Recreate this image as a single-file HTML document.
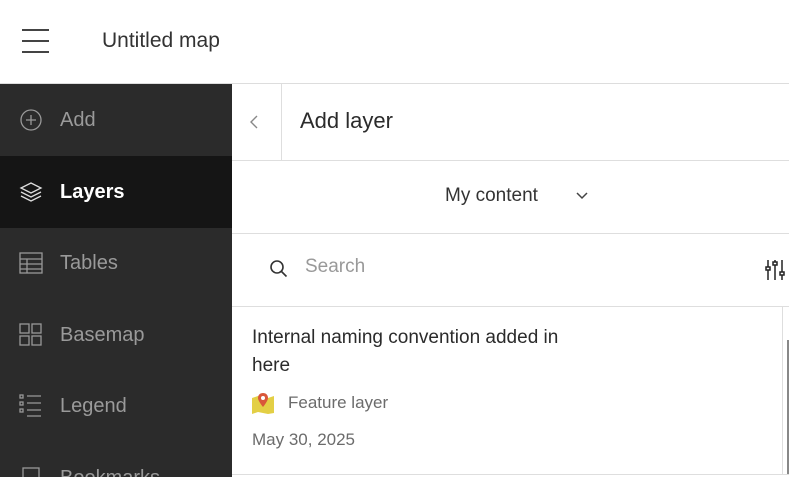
<!DOCTYPE html>
<html style="width:789px;height:477px;overflow:hidden"><head><style>
*{margin:0;padding:0;box-sizing:border-box}
body{width:789px;height:477px;overflow:hidden;background:#fff;font-family:"Liberation Sans",sans-serif;position:relative;color:#2b2b2b}
.top{position:absolute;left:0;top:0;width:789px;height:84px;border-bottom:1px solid #ddd}
.side{position:absolute;left:0;top:84px;width:232px;height:393px;background:#2b2b2b;overflow:hidden}
.item{position:absolute;left:0;width:232px;height:72px;color:#9a9a9a;font-size:20px;overflow:hidden}
.item span{position:absolute;left:60px;top:25px}
.item svg{position:absolute;left:19px;top:24px}
.abs{position:absolute}
.hl{position:absolute;background:#dedede;height:1px}
</style></head><body>
<div class="top">
<div class="abs" style="left:22px;top:29px;width:27px;height:2px;background:#444"></div>
<div class="abs" style="left:22px;top:40px;width:27px;height:2px;background:#444"></div>
<div class="abs" style="left:22px;top:51px;width:27px;height:2px;background:#444"></div>
<div class="abs" style="left:102px;top:29px;font-size:21px;color:#333">Untitled map</div>
</div>
<div class="side">
<div class="item" style="top:0"><svg width="24" height="24" viewBox="0 0 24 24" fill="none" stroke="#999" stroke-width="1.3"><circle cx="12" cy="12" r="10"/><path d="M12 7v10M7 12h10"/></svg><span>Add</span></div>
<div class="item" style="top:72px;background:#151515;color:#fff;font-weight:bold"><svg width="24" height="24" viewBox="0 0 24 24" fill="none" stroke="#ddd" stroke-width="1.3"><path d="M2 8l10-5 10 5-10 5z"/><path d="M2 12l10 5 10-5"/><path d="M2 16l10 5 10-5"/></svg><span>Layers</span></div>
<div class="item" style="top:143px"><svg width="24" height="24" viewBox="0 0 24 24" fill="none" stroke="#999" stroke-width="1.3"><rect x="1" y="2" width="22" height="20"/><path d="M1 8h22M1 13h22M1 18h22M8 8v14"/></svg><span>Tables</span></div>
<div class="item" style="top:215px"><svg width="24" height="24" viewBox="0 0 24 24" fill="none" stroke="#999" stroke-width="1.3"><rect x="1" y="1" width="9" height="9"/><rect x="13" y="1" width="9" height="9"/><rect x="1" y="13" width="9" height="9"/><rect x="13" y="13" width="9" height="9"/></svg><span>Basemap</span></div>
<div class="item" style="top:286px"><svg width="24" height="24" viewBox="0 0 24 24" fill="none" stroke="#999" stroke-width="1.3"><rect x="1" y="1" width="3" height="3"/><rect x="1" y="8" width="3" height="3"/><rect x="1" y="15" width="3" height="3"/><path d="M8 2h14M8 9h14M8 16h14M8 22h14"/></svg><span>Legend</span></div>
<div class="item" style="top:358px;height:35px"><svg width="24" height="24" viewBox="0 0 24 24" fill="none" stroke="#999" stroke-width="1.3"><rect x="4" y="2" width="16" height="20"/></svg><span>Bookmarks</span></div>
</div>
<div class="hl" style="left:232px;top:160px;width:557px"></div>
<div class="hl" style="left:232px;top:233px;width:557px"></div>
<div class="hl" style="left:232px;top:306px;width:557px"></div>
<div class="hl" style="left:232px;top:474px;width:557px"></div>
<div class="abs" style="left:281px;top:84px;width:1px;height:76px;background:#dedede"></div>
<svg class="abs" style="left:250px;top:115px" width="8" height="14" viewBox="0 0 8 14" fill="none" stroke="#888" stroke-width="1.4"><path d="M7 1L1 7l6 6"/></svg>
<div class="abs" style="left:300px;top:108px;font-size:22px;color:#2b2b2b">Add layer</div>
<div class="abs" style="left:445px;top:185px;font-size:19px;color:#333">My content</div>
<svg class="abs" style="left:576px;top:192px" width="12" height="8" viewBox="0 0 12 8" fill="none" stroke="#444" stroke-width="1.5"><path d="M1 1l5 5 5-5"/></svg>
<svg class="abs" style="left:268px;top:258px" width="22" height="22" viewBox="0 0 22 22" fill="none" stroke="#333" stroke-width="1.6"><circle cx="9" cy="9" r="6"/><path d="M13.5 13.5l5 5"/></svg>
<div class="abs" style="left:305px;top:256px;font-size:19px;color:#999">Search</div>
<svg class="abs" style="left:765px;top:258px" width="24" height="24" viewBox="0 0 24 24" fill="none" stroke="#222" stroke-width="1.5"><path d="M3 2v20M10 2v20M17 2v20"/><rect x="1" y="9" width="4" height="3" fill="#fff"/><rect x="8" y="4" width="4" height="3" fill="#fff"/><rect x="15" y="14" width="4" height="3" fill="#fff"/></svg>
<div class="abs" style="left:782px;top:306px;width:1px;height:168px;background:#dedede"></div>
<div class="abs" style="left:787px;top:340px;width:2px;height:134px;background:#888"></div>
<div class="abs" style="left:252px;top:324px;font-size:19px;line-height:28px;color:#2b2b2b;width:345px">Internal naming convention added in here</div>
<svg class="abs" style="left:251px;top:392px" width="24" height="22" viewBox="0 0 24 22"><path d="M1 6l6-2 10 2 6-2v17l-6 1-10-2-6 2z" fill="#e3cf45"/><path d="M12 1c-3 0-5 2-5 5 0 3 5 9 5 9s5-6 5-9c0-3-2-5-5-5z" fill="#d9573a"/><circle cx="12" cy="6" r="2" fill="#fff"/></svg>
<div class="abs" style="left:288px;top:393px;font-size:17px;color:#6b6b6b">Feature layer</div>
<div class="abs" style="left:252px;top:430px;font-size:17px;color:#6b6b6b">May 30, 2025</div>
</body></html>
